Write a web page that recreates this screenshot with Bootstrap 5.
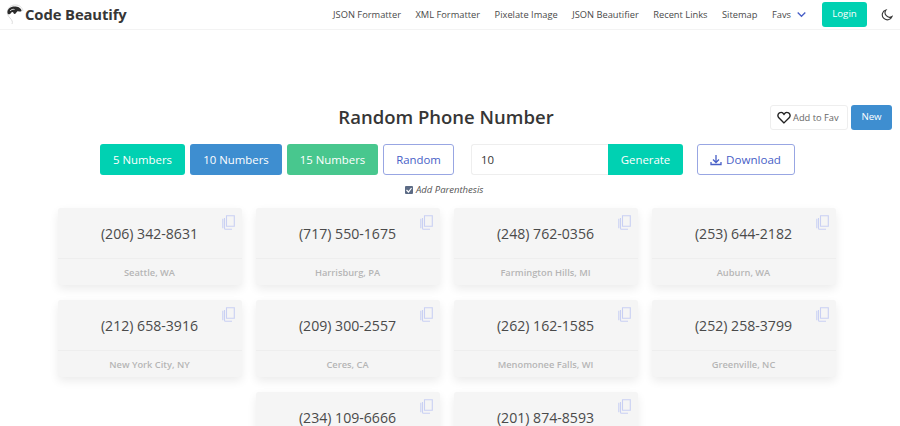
<!DOCTYPE html>
<html>
<head>
<title>Random Phone Number</title>
<link href="https://cdn.jsdelivr.net/npm/bootstrap@5.3.3/dist/css/bootstrap.min.css" rel="stylesheet">
<script src="https://cdn.jsdelivr.net/npm/bootstrap@5.3.3/dist/js/bootstrap.bundle.min.js"></script>
<style>
html, body { overflow: hidden; height: 426px; }
body { font-family: "Open Sans", "Noto Sans", sans-serif; color: #363636; background: #fff; }
.top-bar { height: 30px; border-bottom: 1px solid #f3f3f3; padding: 0 4px 0 6px; }
.brand-name { font-size: 14.8px; font-weight: 700; color: #363636; line-height: 1; letter-spacing: -.1px; }
.top-links { gap: 14.5px; margin-right: 16px; }
.top-links a { font-size: 9.3px; color: #4a4a4a; text-decoration: none; }
.favs-arrow { margin-left: 6px; }
.btn-login { background: #00d1b2; color: #fff; font-size: 9.7px; width: 45px; height: 25px; padding: 0; border: 0; border-radius: 3px; margin-right: 14px; }
.theme-icon { margin-right: 3px; }
.title-row { display: grid; grid-template-columns: 1fr auto 1fr; align-items: center; margin-top: 75px; padding-right: 8px; height: 25px; }
.page-title { font-size: 18.5px; font-weight: 600; color: #363636; margin: 0; }
.btn-fav { background: #fff; border: 1px solid #eee; color: #666; font-size: 9.3px; height: 25px; width: 78px; padding: 0 0 0 6px; border-radius: 3px; }
.fav-heart { margin-right: 2px; }
.btn-new { background: #3e8ed0; color: #fff; border: 0; font-size: 9.7px; height: 25px; width: 41px; padding: 0; border-radius: 3px; margin-left: 3px; }
.tool-row { margin: 14px 0 0 100px; height: 31px; }
.tool-btn { height: 31px; font-size: 11.4px; padding: 0; border-radius: 3px; color: #fff; border: 0; }
.btn-five { background: #00d1b2; width: 85px; }
.btn-ten { background: #3e8ed0; width: 92px; margin-left: 5px; }
.btn-fifteen { background: #48c78e; width: 91px; margin-left: 5px; }
.btn-outline-blue { background: #fff; border: 1px solid #98a6e3; color: #485fc7; }
.btn-random { width: 71px; margin-left: 5px; }
.count-input { width: 137px; height: 31px; margin-left: 17px; font-size: 11.4px; border: 1px solid #eee; border-right: 0; border-radius: 3px 0 0 3px; padding: 0 9px; color: #363636; }
.btn-generate { background: #00d1b2; width: 75px; border-radius: 0 3px 3px 0; }
.btn-download { width: 98px; margin-left: 14px; padding-right: 1px; font-size: 11.6px; }
.paren-row { height: 12px; margin: 9px 0 0 405px; font-size: 9.5px; font-style: italic; color: #555; line-height: 12px; }
.paren-box { width: 8px; height: 8px; background: #5c6b85; border-radius: 1px; margin-right: 3px; }
.phone-grid { display: flex; flex-wrap: wrap; justify-content: center; gap: 15px 14px; margin-top: 12px; padding-right: 7px; }
.phone-card { position: relative; width: 184px; height: 77px; background: #f5f5f5; border-radius: 3px; box-shadow: 0 4px 10px rgba(10, 10, 10, .08); }
.phone-num { height: 51px; font-size: 14.1px; line-height: 52px; text-align: center; color: #4a4a4a; border-bottom: 1px solid #eeeeee; }
.phone-place { height: 26px; font-size: 9.3px; font-weight: 600; line-height: 27px; text-align: center; color: #b5b5b5; }
.copy-icon { position: absolute; top: 7px; right: 7px; }
</style>
</head>
<body>
<nav class="top-bar d-flex align-items-center">
    <a class="d-flex align-items-center text-decoration-none me-auto" href="#">
        <svg width="19" height="22" viewBox="0 0 19 22">
            <path d="M6 20c1-2 0-4-2-6C2 12 1 10 1.500 7 2.500 2.500 6 1 9.500 1c4 0 7 2.500 7.500 6" fill="none" stroke="#ddd" stroke-width="1"/>
            <path d="M1.500 9c-.5-4 3-6.500 7-6.500 3.500 0 6.500 1.500 7 4 .3 1.500-2 1-3.500.8-1.500-.2-1.500 2.700-3.500 2.700-1 0-1-2-2-2-1.500 0-1.500 2-3 2.300-1 .2-1.800-.3-2-1.300z" fill="#2b2b2b"/>
            <path d="M4 7c1-1.500 3-2 4.500-1.500" fill="none" stroke="#fff" stroke-width=".8"/>
        </svg>
        <span class="brand-name">Code Beautify</span>
    </a>
    <div class="top-links d-flex align-items-center">
        <a href="#">JSON Formatter</a>
        <a href="#">XML Formatter</a>
        <a href="#">Pixelate Image</a>
        <a href="#">JSON Beautifier</a>
        <a href="#">Recent Links</a>
        <a href="#">Sitemap</a>
        <a href="#" class="d-flex align-items-center">Favs
            <svg class="favs-arrow" width="9" height="7" viewBox="0 0 9 7"><path d="M.7 1.500l3.800 3.800 3.800-3.800" fill="none" stroke="#485fc7" stroke-width="1.300"/></svg>
        </a>
    </div>
    <button class="btn-login">Login</button>
    <svg class="theme-icon" width="12" height="12" viewBox="0 0 12 12"><path d="M5 1a5 5 0 1 0 6 6.500A4.500 4.500 0 0 1 5 1z" fill="none" stroke="#363636" stroke-width="1.100"/></svg>
</nav>

<div class="title-row">
    <span></span>
    <h1 class="page-title">Random Phone Number</h1>
    <div class="d-flex justify-content-end">
        <button class="btn-fav d-flex align-items-center">
            <svg class="fav-heart" width="14" height="13" viewBox="0 0 13 12"><path d="M6.500 11L1.700 6.200C.3 4.800.7 2.600 2.200 1.700c1.500-.8 3.300-.3 4.300 1.300 1-1.600 2.800-2.100 4.300-1.300 1.500.9 1.900 3.100.5 4.500z" fill="none" stroke="#222" stroke-width="1.300"/></svg>
            Add to Fav
        </button>
        <button class="btn-new">New</button>
    </div>
</div>

<div class="tool-row d-flex">
    <button class="tool-btn btn-five">5 Numbers</button>
    <button class="tool-btn btn-ten">10 Numbers</button>
    <button class="tool-btn btn-fifteen">15 Numbers</button>
    <button class="tool-btn btn-outline-blue btn-random">Random</button>
    <input class="count-input" type="text" value="10">
    <button class="tool-btn btn-generate">Generate</button>
    <button class="tool-btn btn-outline-blue btn-download d-flex align-items-center justify-content-center">
        <svg class="me-1" width="12" height="12" viewBox="0 0 12 12"><path d="M6 1v7M3 5.500L6 8.500 9 5.500M1 8v2.500h10V8" fill="none" stroke="#485fc7" stroke-width="1.300"/></svg>
        Download
    </button>
</div>

<div class="paren-row d-flex align-items-center">
    <svg class="paren-box" viewBox="0 0 8 8"><path d="M1.500 4l2 2 3-4" fill="none" stroke="#fff" stroke-width="1.200"/></svg>
    Add Parenthesis
</div>

<div class="phone-grid" id="phone-grid"></div>

<script>
    const phones = [
        ["(206) 342-8631", "Seattle, WA"],
        ["(717) 550-1675", "Harrisburg, PA"],
        ["(248) 762-0356", "Farmington Hills, MI"],
        ["(253) 644-2182", "Auburn, WA"],
        ["(212) 658-3916", "New York City, NY"],
        ["(209) 300-2557", "Ceres, CA"],
        ["(262) 162-1585", "Menomonee Falls, WI"],
        ["(252) 258-3799", "Greenville, NC"],
        ["(234) 109-6666", ""],
        ["(201) 874-8593", ""]
    ];
    let html = "";
    for (let i = 0; i < phones.length; i++) {
        html += `
            <div class="phone-card">
                <svg class="copy-icon" width="13" height="15" viewBox="0 0 13 15">
                    <path d="M4.500 .7h7.800v10.600H4.500z M2.500 3v10.300a1 1 0 0 0 1 1h6.500M.8 3.800v9.500" fill="none" stroke="#c9d0f3" stroke-width="1.100"/>
                </svg>
                <div class="phone-num">${phones[i][0]}</div>
                <div class="phone-place">${phones[i][1]}</div>
            </div>`;
    }
    document.getElementById("phone-grid").innerHTML = html;
</script>
</body>
</html>
